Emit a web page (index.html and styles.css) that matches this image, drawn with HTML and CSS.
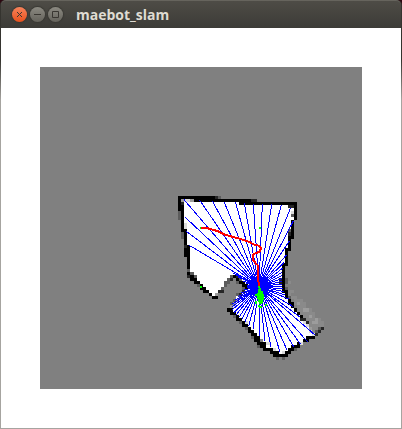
FILE: index.html
```html
<!DOCTYPE html>
<html lang="en">
<head>
<meta charset="utf-8">
<meta name="viewport" content="width=device-width, initial-scale=1">
<title>maebot_slam</title>
<link rel="stylesheet" href="styles.css">
</head>
<body>
<div class="window">
  <header class="titlebar">
    <div class="controls">
      <button class="control control-close" type="button" aria-label="Close"><svg viewBox="0 0 15 15" aria-hidden="true"><path d="M5 5l5 5M10 5l-5 5"/></svg></button>
      <button class="control" type="button" aria-label="Minimize"><svg viewBox="0 0 15 15" aria-hidden="true"><path d="M4 7.5h7"/></svg></button>
      <button class="control" type="button" aria-label="Maximize"><svg viewBox="0 0 15 15" aria-hidden="true"><path d="M4.5 4.5h6v6h-6z"/></svg></button>
    </div>
    <h1 class="title">maebot_slam</h1>
  </header>
  <main class="content">
    <svg class="map" viewBox="-390 -354 966 966" role="img" aria-label="Occupancy grid with laser rays and robot path">
      <!-- Occupancy grid: one unit per cell, one stroke segment per run of cells in a row -->
      <g class="cells" transform="translate(25 33) scale(9.12)">
        <path class="free" d="M2 1H25V2H38V8H37V14H36V18H35V23H34V30H35V33H36V35H37V36H38V37H39V38H40V39H41V40H42V41H43V42H44V43H45V46H43V47H41V48H39V49H38V50H36V51H35V52H32V51H31V50H29V49H28V47H27V46H26V45H25V44H24V43H23V42H22V41H21V40H20V39H19V38H18V37H17V35H18V34H19V33H20V32H21V31H22V29H21V28H20V27H18V28H17V29H16V30H15V31H14V32H13V33H11V32H10V31H9V30H8V29H7V28H6V27H5V26H4V17H3V11H2Z"/>
        <path class="trace" d="M36 28.5h1M35 30.5h1M36 31.5h2M36 32.5h1M37 33.5h2M38 34.5h3M38 35.5h4M39 36.5h3M39 37.5h5M40 38.5h5M41 39.5h4M42 40.5h5M42 41.5h6M43 42.5h5M44 43.5h3M44 44.5h2"/>
        <path class="soft" d="M1 1.5h1M4 1.5h1M39 35.5h1M41 37.5h2M43 39.5h1M44 41.5h2M45 40.5h1M18 35.5h1M17 36.5h1M12 32.5h1M43 43.5h1M19 34.5h1"/>
        <path class="faint" d="M2 1.5h2M2 9.5h1M2 10.5h1M37 5.5h1M18 36.5h1M41 41.5h1M42 42.5h1M43 44.5h1M44 45.5h1M40 48.5h1M34 51.5h1M22 41.5h1M29 48.5h1M31 50.5h1"/>
        <path class="partial" d="M13 0.5h1M0 5.5h1M0 6.5h1M0 7.5h1M37 6.5h1M36 11.5h1M1 12.5h1M1 13.5h1M3 24.5h1M4 25.5h1M5 26.5h1M6 29.5h1M14 30.5h1M15 29.5h1M15 28.5h1M16 27.5h1M16 28.5h1M17 26.5h1M20 27.5h1M19 28.5h1M21 30.5h1M19 32.5h1M20 33.5h1M18 34.5h1M17 35.5h1M35 27.5h1M35 28.5h1M35 30.5h1M36 33.5h1M18 39.5h1M20 41.5h1M22 43.5h1M24 46.5h1M26 49.5h1M28 50.5h2M30 51.5h1M32 53.5h1M34 53.5h1M38 50.5h1M44 46.5h1M46 43.5h1M46 44.5h1M45 44.5h1"/>
        <path class="dark" d="M12 0.5h1M24 1.5h2M1 2.5h1M36 3.5h2M36 12.5h1M2 16.5h1M3 26.5h1M13 31.5h1M14 31.5h1M17 27.5h1M19 26.5h1M21 31.5h1M20 32.5h1M33 28.5h1M33 27.5h1M40 40.5h1M41 40.5h1M42 41.5h1M47 43.5h1M45 45.5h1M46 44.5h1"/>
        <path class="wall" d="M0 .5h12M0 1.5h1M5 1.5h19M0 2.5h1M20 2.5h19M0 3.5h2M38 3.5h1M0 4.5h2M38 4.5h1M1 5.5h1M38 5.5h1M1 6.5h1M38 6.5h1M1 7.5h1M38 7.5h1M1 8.5h1M37 8.5h1M1 9.5h1M37 9.5h1M1 10.5h1M37 10.5h1M1 11.5h2M37 11.5h1M2 12.5h1M37 12.5h1M2 13.5h1M36 13.5h2M2 14.5h1M36 14.5h1M2 15.5h1M36 15.5h1M3 16.5h1M36 16.5h1M2 17.5h2M35 17.5h2M2 18.5h2M35 18.5h1M2 19.5h2M35 19.5h1M3 20.5h1M35 20.5h1M3 21.5h1M35 21.5h1M3 22.5h1M34 22.5h2M3 23.5h1M34 23.5h1M34 24.5h1M3 25.5h1M34 25.5h1M4 26.5h1M18 26.5h1M34 26.5h1M4 27.5h2M19 27.5h1M34 27.5h1M5 28.5h2M20 28.5h2M34 28.5h1M7 29.5h1M21 29.5h2M34 29.5h1M7 30.5h2M22 30.5h1M34 30.5h1M8 31.5h2M34 31.5h2M10 32.5h1M35 32.5h1M11 33.5h2M35 33.5h1M36 34.5h1M36 35.5h2M37 36.5h1M16 37.5h2M38 37.5h1M17 38.5h2M39 38.5h1M19 39.5h1M40 39.5h1M19 40.5h2M21 41.5h1M21 42.5h2M23 43.5h1M23 44.5h2M24 45.5h2M44 46.5h1M25 46.5h2M42 46.5h3M25 47.5h2M41 47.5h2M26 48.5h3M39 48.5h1M27 49.5h2M37 49.5h3M28 50.5h3M36 50.5h2M30 51.5h3M35 51.5h2M31 52.5h5"/>
      </g>
      <!-- Laser scan -->
      <path class="rays" d="M267 305L277 58M267 305L305 58M267 305L334 60M267 305L362 68M267 305L370 108M267 305L358 168M267 305L350 209M267 305L343 232M267 305L340 248M267 305L336 262M267 305L336 272M267 305L336 281M267 305L336 289M267 305L336 297M267 305L336 304M267 305L338 312M267 305L342 320M267 305L345 330M267 305L356 342M267 305L368 364M267 305L390 396M267 305L435 450M267 305L413 471M267 305L391 477M267 305L372 487M267 305L351 495M267 305L330 500M267 305L303 485M267 305L285 468M267 305L267 452M267 305L249 433M267 305L236 424M267 305L225 410M267 305L216 402M267 305L207 397M267 305L198 390M267 305L192 383M267 305L187 374M267 305L187 365M267 305L187 357M267 305L194 346M267 305L204 334M267 305L214 324M267 305L222 315M267 305L230 309M267 305L232 304M267 305L232 300M267 305L228 295M267 305L219 288M267 305L205 276M267 305L190 265M267 305L56 180M267 305L48 138M267 305L46 97M267 305L42 44M267 305L88 44M267 305L127 48M267 305L162 50M267 305L196 50M267 305L223 55M267 305L250 58"/>
      <path class="scan-core" d="M264 272L270 272L273 286L285 280L285 290L298 294L297 302L305 306L296 311L294 320L284 320L280 330L270 324L256 330L252 320L242 318L243 310L234 305L241 299L240 290L250 291L250 281L261 287Z"/>
      <!-- Driven path and pose estimates -->
      <path class="particles" d="M264 303h6v6h3v9h6v9h3v18h-3v9h-3v3h-9v-6h-3v-9h-3v-18h3v-12h3zM254 327h6v6h-6zM256 348h6v9h-6zM264 360h6v3h6v6h-9v-3h-3zM285 357h6v6h-6zM90 126h6v5h-6zM267 126h6v5h-6zM90 303h6v5h-6z"/>
      <path class="route" d="M94 128L110 129L125 133L145 139L165 149L190 156L215 163L240 172L255 180L268 182L273 190L268 200L252 207L248 213L250 225L258 236L265 242L265 285L267 304"/>
    </svg>
  </main>
</div>
</body>
</html>
```
FILE: styles.css
```css
* {
  box-sizing: border-box;
}

body {
  margin: 0;
  background: #2c0710;
}

.window {
  display: flex;
  flex-direction: column;
  min-height: 100vh;
  padding: 0 1px 1px;
  border-radius: 5px 5px 0 0;
  background: linear-gradient(#35342f 60px, #a6a4a0 100px);
}

.titlebar {
  display: flex;
  align-items: center;
  gap: 13px;
  height: 28px;
  padding: 0 11px;
  border-top: 1px solid #66645d;
  border-radius: 5px 5px 0 0;
  background: linear-gradient(#4e4c46, #3c3b37);
}

.controls {
  display: flex;
  gap: 3px;
}

.control {
  width: 15px;
  height: 15px;
  padding: 0;
  border: 0;
  border-radius: 50%;
  background: linear-gradient(#8b8981, #65635c);
  box-shadow: 0 0 1px 1px #3a3934;
}

.control-close {
  background: linear-gradient(#f7835b, #e9511d);
}

.control svg {
  display: block;
  width: 100%;
  fill: none;
  stroke: #3a3732;
  stroke-width: 1;
}

.title {
  margin: 0;
  color: #dfdbd2;
  font: bold 14px/20px "Open Sans", "Noto Sans", sans-serif;
}

.content {
  flex: 1;
  padding: 39px;
  background: #fff;
}

.map {
  display: block;
  width: 100%;
  background: #808080;
  shape-rendering: crispEdges;
}

.cells path {
  fill: none;
  stroke-width: 1;
}

.cells .free {
  fill: #fff;
}

.trace {
  stroke: #8a8a8a;
}

.soft {
  stroke: #9c9c9c;
}

.faint {
  stroke: #dcdcdc;
}

.partial {
  stroke: #5c5c5c;
}

.wall {
  stroke: #000;
}

.dark {
  stroke: #262626;
}

.rays {
  fill: none;
  stroke: #00f;
  stroke-width: 3;
}

.scan-core {
  fill: #00f;
}

.particles {
  fill: #0f0;
}

.route {
  fill: none;
  stroke: #f00;
  stroke-width: 6;
}
```
